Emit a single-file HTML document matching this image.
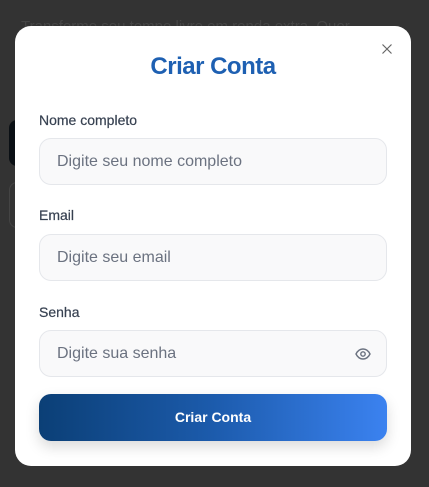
<!DOCTYPE html>
<html><head><meta charset="utf-8"><style>
*{box-sizing:border-box;margin:0;padding:0}
body{width:429px;height:487px;background:#333;font-family:"Liberation Sans",Arial,sans-serif;position:relative;overflow:hidden}
.bgtext{position:absolute;left:21px;top:18px;color:#454545;font-size:15px;white-space:nowrap}
.blk{position:absolute;left:9px;top:120px;width:20px;height:46px;background:#0a0f14;border-radius:8px}
.blk2{position:absolute;left:9px;top:182px;width:20px;height:46px;border:1px solid #444;border-radius:8px}
.modal{position:absolute;left:15px;top:26px;width:396px;height:440px;background:#fff;border-radius:16px}
.close{position:absolute;left:366px;top:17px;width:12px;height:12px}
h1{position:absolute;left:0;right:0;top:27px;text-align:center;color:#1e60b2;font-size:24px;font-weight:bold;letter-spacing:-0.5px}
label{position:absolute;left:24px;font-size:14px;color:#374151;-webkit-text-stroke:0.2px #374151}
.in{position:absolute;left:24px;width:348px;height:47px;background:#f9f9fa;border:1px solid #e5e7eb;border-radius:12px;padding-left:17px;line-height:45px;font-size:16px;color:#6b7280}
.btn{position:absolute;left:24px;top:368px;width:348px;height:47px;border-radius:12px;background:linear-gradient(90deg,#0b3f76,#1c5bac 50%,#3b82f0);color:#fff;font-weight:bold;font-size:14px;text-align:center;line-height:47px;box-shadow:0 6px 14px rgba(0,0,0,0.15)}
</style></head><body>
<div class="bgtext">Transforme seu tempo livre em renda extra. Quer</div>
<div class="blk"></div><div class="blk2"></div>
<div class="modal">
<svg class="close" viewBox="0 0 12 12"><path d="M1.5 1.5L10.5 10.5M10.5 1.5L1.5 10.5" stroke="#666" stroke-width="1.2" fill="none"/></svg>
<h1>Criar Conta</h1>
<label style="top:86px">Nome completo</label>
<div class="in" style="top:112px">Digite seu nome completo</div>
<label style="top:181px">Email</label>
<div class="in" style="top:208px">Digite seu email</div>
<label style="top:278px">Senha</label>
<div class="in" style="top:304px">Digite sua senha
<svg style="position:absolute;right:15px;top:16px" width="16" height="14" viewBox="0 0 16 14"><path d="M1 7C3 3 5.5 2 8 2s5 1 7 5c-2 4-4.5 5-7 5S3 11 1 7z" fill="none" stroke="#6b7280" stroke-width="1.4"/><circle cx="8" cy="7" r="2.2" fill="none" stroke="#6b7280" stroke-width="1.4"/></svg></div>
<div class="btn">Criar Conta</div>
</div>
</body></html>
